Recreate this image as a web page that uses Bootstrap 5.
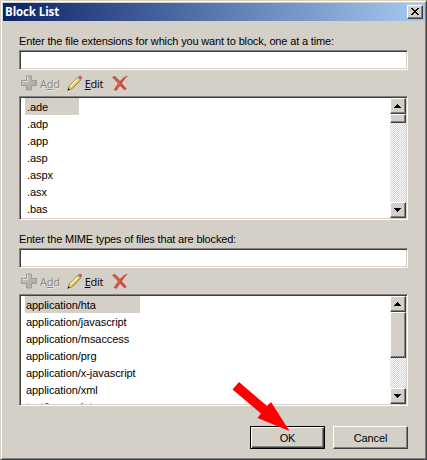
<!DOCTYPE html>
<html lang="en">
<head>
<meta charset="utf-8">
<title>Block List</title>
<link href="https://cdn.jsdelivr.net/npm/bootstrap@5.3.0/dist/css/bootstrap.min.css" rel="stylesheet">
<style>
body{font:11px/17px "Liberation Sans",Arial,sans-serif;color:#000;background:#d4d0c8}
.dlg{width:427px;height:460px;background:#d4d0c8;border:1px solid #d4d0c8;border-right-color:#404040;border-bottom-color:#404040;box-shadow:inset 1px 1px #fff,inset -1px -1px #808080;padding:2px}
.titlebar{height:18px;margin-right:-1px;background:linear-gradient(90deg,#0a246a,#a6caf0);color:#fff;font:bold 11.5px/18px "Open Sans","Noto Sans",sans-serif;letter-spacing:-.1px;padding:0 2px}
.raised{background:#d4d0c8;border:1px solid;border-color:#fff #404040 #404040 #fff;box-shadow:inset -1px -1px #808080}
.closebtn{width:16px;height:14px}
.content{padding:12px 16px 0 16px}
.lbl{height:17px;white-space:nowrap;letter-spacing:-.15px}
.second{margin-top:11px;letter-spacing:-.17px}
.sunken{background:#fff;border:1px solid;border-color:#808080 #fff #fff #808080;box-shadow:inset 1px 1px #404040,inset -1px -1px #d4d0c8;width:389px}
.field{height:20px;border-radius:0;padding:2px;display:block;outline:0}
.tools{height:26px;padding:5px 0 0 2px;font-family:"Open Sans","Noto Sans",sans-serif;letter-spacing:-.25px}
.tool{height:18px;line-height:17px}
.off{color:#898781;text-shadow:1px 1px #e9e6df}
.off span{margin-left:3px}
.ed{margin-left:7px}
.ed span{margin-left:2px}
.del{margin-left:9px}
.lst{padding:1px;display:flex}
.rows{flex:1;overflow:hidden;padding-left:4px;letter-spacing:-.07px}
.rows div{height:17px;line-height:19px;padding-left:2px;white-space:nowrap}
.mime div{padding-left:1px}
.picked{background:#d4d0c8}
.sb{width:16px;background:repeating-conic-gradient(#d4d0c8 0 25%,#fff 0 50%) 0 0/2px 2px}
.sb .raised{width:16px}
.arr{height:16px;flex:none}
.push{width:75px;height:23px;border-radius:0;font-size:11px;line-height:20px;padding:0;color:#000;text-align:center;letter-spacing:-.1px}
.def{border-color:#000;box-shadow:inset 1px 1px #fff,inset -1px -1px #404040,inset -2px -2px #808080}
.pointer{position:absolute;left:0;top:0;pointer-events:none}
svg{display:block}
#extlist{height:124px}
#mimelist{height:112px}
.w54{width:54px}
.w115{width:115px}
.t1{height:9px}
.t2{height:46px}
.acts{gap:8px;padding-top:20px;width:389px}
</style>
<script src="https://cdn.jsdelivr.net/npm/bootstrap@5.3.0/dist/js/bootstrap.bundle.min.js"></script>
</head>
<body class="m-0 overflow-hidden">
<svg width="0" height="0" class="position-absolute">
<defs>
<linearGradient id="gp" x2="1" y2="1"><stop stop-color="#c9c7c2"/><stop offset="1" stop-color="#a5a39f"/></linearGradient>
<symbol id="plus" viewBox="0 0 16 16"><path d="M5.5 1h5v4.500h5v5h-5v4.500h-5v-4.500h-5v-5h5z" fill="url(#gp)" stroke="#9d9b97"/><path d="M6.500 6.500V2M1.500 6.500h5" stroke="#dedcd6" fill="none"/></symbol>
<symbol id="pencil" viewBox="0 0 16 16"><path d="M.8 15.400l1.700-4.700L11.200 2l2.800 2.800-8.600 8.700z" fill="#f6d873" stroke="#8a6a30" stroke-width=".8"/><path d="M3.500 11.200L11.700 3" stroke="#fff6bd" stroke-width="1.200"/><path d="M5 12.900l8.300-8.400" stroke="#c8963c" stroke-width=".8"/><path d="M11 2.200L12.700.8q1.800-.3 2.500 1.900L13.700 5z" fill="#c65b62"/><path d="M10.600 2.700l2.700 2.700" stroke="#a9b3c0" stroke-width="1.300"/><path d="M.6 15.500l.9-2.600 1.700 1.700z" fill="#222"/></symbol>
<symbol id="cross" viewBox="0 0 16 16"><path d="M.6 2.200Q2.500.6 4 2.300l4 4.300Q11 2.500 15.200 1 12 4 9.400 8.200l4.800 5.600-1.500 1.300L8 10.200 4.200 15.400 2.200 14.500 6.300 8.300z" fill="#d34a35" stroke="#b63527" stroke-width=".6"/><path d="M2 2.500l5.500 5.600L3.800 13.600" stroke="#e98773" stroke-width=".7" fill="none"/></symbol>
<symbol id="up" viewBox="0 0 14 14"><path d="M3 9h7v-1h-1v-1h-1v-1h-1v-1h-1v1h-1v1h-1v1h-1z"/></symbol>
<symbol id="down" viewBox="0 0 14 14"><path d="M3 5h7v1h-1v1h-1v1h-1v1h-1v-1h-1v-1h-1v-1h-1z"/></symbol>
</defs></svg>
<main class="dlg position-relative">
<header class="titlebar d-flex align-items-center justify-content-between"><span>Block List</span><div class="raised closebtn"><svg width="14" height="12" viewBox="0 0 14 12" shape-rendering="crispEdges"><path d="M3 2h2v1h1v1h2v-1h1v-1h2v1h-1v1h-1v1h-1v1h1v1h1v1h1v1h-2v-1h-1v-1h-2v1h-1v1h-2v-1h1v-1h1v-1h1v-1h-1v-1h-1v-1h-1z"/></svg></div></header>
<div class="content">
<label class="lbl d-block" for="ext">Enter the file extensions for which you want to block, one at a time:</label>
<input id="ext" class="sunken field">
<div class="tools d-flex"><div class="tool off d-flex"><svg width="16" height="16"><use href="#plus"/></svg><span>A<u>d</u>d</span></div><div class="tool d-flex ed"><svg width="16" height="16"><use href="#pencil"/></svg><span><u>E</u>dit</span></div><svg class="del" width="16" height="16"><use href="#cross"/></svg></div>
<div class="sunken lst" id="extlist"><div class="rows"><div class="picked w54">.ade</div><div>.adp</div><div>.app</div><div>.asp</div><div>.aspx</div><div>.asx</div><div>.bas</div></div>
<div class="sb d-flex flex-column"><div class="raised arr"><svg width="14" height="14"><use href="#up"/></svg></div><div class="raised t1"></div><div class="raised arr mt-auto"><svg width="14" height="14"><use href="#down"/></svg></div></div></div>
<label class="lbl d-block second" for="mime">Enter the MIME types of files that are blocked:</label>
<input id="mime" class="sunken field">
<div class="tools d-flex"><div class="tool off d-flex"><svg width="16" height="16"><use href="#plus"/></svg><span>A<u>d</u>d</span></div><div class="tool d-flex ed"><svg width="16" height="16"><use href="#pencil"/></svg><span><u>E</u>dit</span></div><svg class="del" width="16" height="16"><use href="#cross"/></svg></div>
<div class="sunken lst" id="mimelist"><div class="rows mime"><div class="picked w115">application/hta</div><div>application/javascript</div><div>application/msaccess</div><div>application/prg</div><div>application/x-javascript</div><div>application/xml</div><div>text/javascript</div></div>
<div class="sb d-flex flex-column"><div class="raised arr"><svg width="14" height="14"><use href="#up"/></svg></div><div class="raised t2"></div><div class="raised arr mt-auto"><svg width="14" height="14"><use href="#down"/></svg></div></div></div>
<div class="d-flex justify-content-end acts"><button class="raised push def">OK</button><button class="raised push">Cancel</button></div>
</div>
<svg class="pointer" width="426" height="459"><path d="M238 381L231.500 388.500L260 412.500L256.500 417L288.500 430L270 401L266 405z" fill="#f00"/></svg>
</main>
</body>
</html>
